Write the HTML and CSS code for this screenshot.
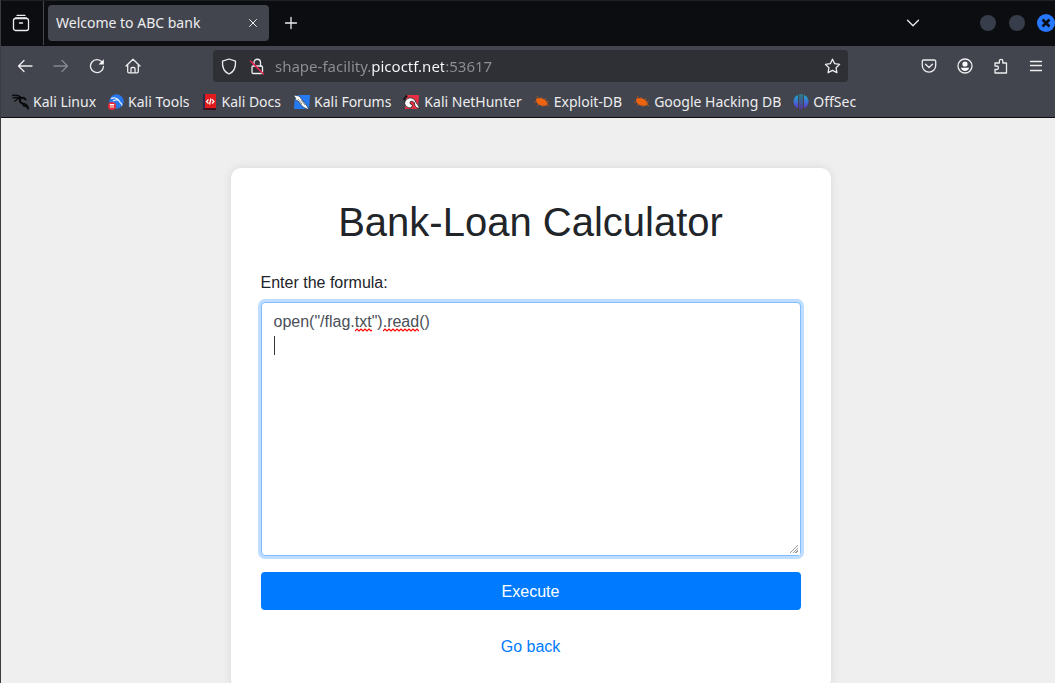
FILE: index.html
```
<!DOCTYPE html>
<html lang="en">
<head>
<meta charset="utf-8">
<title>Welcome to ABC bank</title>
<link rel="stylesheet" href="styles.css">
</head>
<body>
<div class="window">
  <header class="chrome">
    <div class="tabbar">
      <div class="tabview">
        <button class="icon-btn" aria-label="Recent browsing">
          <svg width="18" height="18" viewBox="0 0 18 18" class="line"><path d="M5 1.300h8M3.500 3.800h11"/><rect x="1.500" y="4.500" width="15" height="12" rx="2"/><path d="M7.500 9h3"/></svg>
        </button>
      </div>
      <div class="tab">
        <span class="tab-title">Welcome to ABC bank</span>
        <button class="icon-btn tab-close" aria-label="Close tab">
          <svg width="10" height="10" viewBox="0 0 10 10" class="line thin"><path d="M1.500 1.500l7 7M8.500 1.500l-7 7"/></svg>
        </button>
      </div>
      <button class="icon-btn new-tab" aria-label="New tab">
        <svg width="14" height="14" viewBox="0 0 14 14" class="line"><path d="M7 1.500v11M1.500 7h11"/></svg>
      </button>
      <div class="window-controls">
        <button class="icon-btn list-tabs" aria-label="List all tabs">
          <svg width="14" height="8" viewBox="0 0 14 8" class="line"><path d="M1.500 1.200 7 6.700l5.500-5.500"/></svg>
        </button>
        <button class="dot" aria-label="Minimize"></button>
        <button class="dot" aria-label="Maximize"></button>
        <button class="dot close" aria-label="Close window">
          <svg width="10" height="10" viewBox="0 0 10 10"><path d="M1.500 1.500l7 7M8.500 1.500l-7 7" stroke="#0b0d12" stroke-width="2.600"/></svg>
        </button>
      </div>
    </div>
    <nav class="toolbar" aria-label="Navigation">
      <div class="nav-buttons">
        <button class="icon-btn" aria-label="Back"><svg width="16" height="16" viewBox="0 0 16 16" class="line"><path d="M15 8H1.700M7 2.500 1.500 8 7 13.500"/></svg></button>
        <button class="icon-btn faded" aria-label="Forward"><svg width="16" height="16" viewBox="0 0 16 16" class="line"><path d="M1 8h13.300M9 2.500 14.500 8 9 13.500"/></svg></button>
        <button class="icon-btn" aria-label="Reload"><svg width="16" height="16" viewBox="0 0 16 16" class="line"><path d="M13.200 4.200A6.500 6.500 0 1 0 14.500 8.500"/><path d="M14.800 1.200v5.300H9.500z" fill="#fbfbfe" stroke="none"/></svg></button>
        <button class="icon-btn" aria-label="Home"><svg width="16" height="16" viewBox="0 0 16 16" class="line"><path d="M1 8 8 1.300 15 8M2.700 6.800v6.700a1.300 1.300 0 0 0 1.300 1.300h8a1.300 1.300 0 0 0 1.300-1.300V6.800M6 14.500v-4a1 1 0 0 1 1-1h2a1 1 0 0 1 1 1v4"/></svg></button>
      </div>
      <div class="urlbar">
        <svg width="16" height="17" viewBox="0 0 16 17" class="line"><path d="M8 1 14.500 3.200c.4 5.300-1 10.300-6.500 12.800C2.500 13.500 1.100 8.500 1.500 3.200z"/></svg>
        <svg width="16" height="17" viewBox="0 0 16 17" class="line"><rect x="3" y="8" width="10.500" height="7.500" rx="1.200"/><path d="M5 8V4.500a3.200 3.200 0 0 1 6.500 0V8"/><path d="M1.500 3 14.500 16" stroke="#e22850" stroke-width="1.600"/></svg>
        <input class="url" type="text" aria-label="Address" value="shape-facility.picoctf.net:53617">
        <button class="icon-btn" aria-label="Bookmark this page"><svg width="17" height="16" viewBox="0 0 17 16" class="line"><path d="M8.500 1.200l2.200 4.500 4.900.7-3.500 3.400.8 4.900-4.400-2.300-4.400 2.300.8-4.900L1.400 6.400l4.900-.7z"/></svg></button>
      </div>
      <div class="tool-buttons">
        <button class="icon-btn" aria-label="Pocket"><svg width="16" height="16" viewBox="0 0 16 16" class="line"><path d="M2.500 2h11a1.200 1.200 0 0 1 1.200 1.200v4.300a6.700 6.700 0 0 1-13.400 0V3.200A1.200 1.200 0 0 1 2.500 2zM4.500 6.200 8 9.500l3.500-3.300"/></svg></button>
        <button class="icon-btn" aria-label="Account"><svg width="16" height="16" viewBox="0 0 16 16" class="line"><circle cx="8" cy="8" r="7"/><circle cx="8" cy="6" r="2.600" fill="#fbfbfe" stroke="none"/><path d="M3.800 9.800h8.400c-.5 2-2.200 3.200-4.200 3.200s-3.700-1.200-4.200-3.200z" fill="#fbfbfe" stroke="none"/></svg></button>
        <button class="icon-btn" aria-label="Extensions"><svg width="16" height="16" viewBox="0 0 16 16" class="line"><path d="M2 15h11.500V5H9.800V3a1.700 1.700 0 0 0-3.400 0v2H2v3h1.700a1.700 1.700 0 0 1 0 3.500H2z"/></svg></button>
        <button class="icon-btn" aria-label="Menu"><svg width="14" height="14" viewBox="0 0 14 14" class="line"><path d="M1.500 2.500h11M1.500 6.500h11M1.500 11.500h11"/></svg></button>
      </div>
    </nav>
    <nav class="bookmarks" aria-label="Bookmarks">
      <a href="#"><svg width="17" height="16" viewBox="0 0 17 16" fill="none" stroke="#08090b" stroke-linecap="round"><path d="M.5 1.500c4-1 7 0 9 2.500M1 4c3-1.200 5-.5 8 .5M3 7C5 4.800 7 4.200 9.500 4.500" stroke-width="1.300"/><path d="M9 4c2-.6 3.500 0 4.500 1.500M8.500 5c-1.500 3 .5 4.500 3.500 5 2.500.5 3.500 2 4 4.500" stroke-width="2"/><path d="M11 10c0 2 1 2.500 2.500 2.500" stroke-width="1.200"/></svg>Kali Linux</a>
      <a href="#"><svg width="16" height="16" viewBox="0 0 16 16"><circle cx="8.500" cy="7.500" r="7.200" fill="#2878ed"/><path d="M3 4.500c4-1.500 7 .5 8 2M5 7c2-1.500 5-1.500 6-.5 0 2 3 2 3 5" fill="none" stroke="#e8f1ff" stroke-width="1.200"/><circle cx="4" cy="12" r="4" fill="#e52b37"/><path d="M1.800 10.500h4.400M3 10.500v3.500M5 10.500v3.500" stroke="#fff" fill="none"/></svg>Kali Tools</a>
      <a href="#"><svg width="16" height="16" viewBox="0 0 16 16"><path d="M1 1h13v15H1z" fill="#42101c"/><path d="M2 0h12v14H2z" fill="#e21b1f"/><path d="M1 0h2v15H1z" fill="#292b50"/><path d="M6.500 5.500 4.500 7.500l2 2M10 5.500l2 2-2 2M9 4.500l-1.500 6" stroke="#fff" stroke-width="1.200" fill="none"/></svg>Kali Docs</a>
      <a href="#"><svg width="17" height="16" viewBox="0 0 17 16"><path d="M2 1h15l-1 14H1z" fill="#267bf3"/><path d="M0 1l6 1 4 5 4 5 2 4-6-3-5-6-4-2 2-.5z" fill="#fff" stroke="#15191f" stroke-width=".6"/><path d="M5 5l4 5M8 6l4 5" stroke="#222" stroke-width=".5"/></svg>Kali Forums</a>
      <a href="#"><svg width="17" height="16" viewBox="0 0 17 16"><path d="M3 1h13l-1 14H2z" fill="#e82f43"/><path d="M1.500 9C3 3.500 9 2 12 6.500c1 3 4 4.500 4.500 8-4-.5-5-3-5-5.500-1.500-2.500-5-2.500-4.500.5l2.500 2-1.500 2.500C4 14 2 12 1.500 9z" fill="#fff" stroke="#15191f" stroke-width=".8"/><path d="M0 5l3-4 2 1-4 5z" fill="#15191f"/></svg>Kali NetHunter</a>
      <a href="#"><svg width="16" height="14" viewBox="0 0 16 14"><path d="M2 4c3-2 8-.5 10 2l2 3c-1 2-4 2-7 1.500C3.500 9.500 2 7 2 4z" fill="#ed6310"/><path d="M5 4 3 1M8 4 7 2M11 5l1-2M3 7 0 7M5 9l-2 2M8 10l1 2M12 7l3-1M12 9l3 2" stroke="#b9581f" stroke-width=".9"/></svg>Exploit-DB</a>
      <a href="#"><svg width="16" height="14" viewBox="0 0 16 14"><path d="M2 4c3-2 8-.5 10 2l2 3c-1 2-4 2-7 1.500C3.500 9.500 2 7 2 4z" fill="#ed6310"/><path d="M5 4 3 1M8 4 7 2M11 5l1-2M3 7 0 7M5 9l-2 2M8 10l1 2M12 7l3-1M12 9l3 2" stroke="#b9581f" stroke-width=".9"/></svg>Google Hacking DB</a>
      <a href="#"><svg width="16" height="16" viewBox="0 0 16 16"><defs><linearGradient id="off" gradientUnits="userSpaceOnUse" x1="0" y1="0" x2="0" y2="16"><stop offset="0" stop-color="#16b3c8"/><stop offset="1" stop-color="#6a28d9"/></linearGradient></defs><path d="M5 1C-1 3-1 12 5 14zM11 1c6 2 6 11 0 13zM6.500 0h1V15h-1zM8.500 0h1V15h-1z" fill="url(#off)"/></svg>OffSec</a>
    </nav>
  </header>
  <main class="page">
    <section class="card">
      <h1>Bank-Loan Calculator</h1>
      <form class="form">
        <label for="formula">Enter the formula:</label>
        <div class="field">
          <textarea id="formula" rows="10" spellcheck="false">open("/flag.txt").read()
</textarea>
          <svg class="squiggle squiggle-ext" width="17" height="4" viewBox="0 0 17 4"><path d="M0 3l2-2 2 2 2-2 2 2 2-2 2 2 2-2 2 2 1-1"/></svg>
          <svg class="squiggle squiggle-call" width="36" height="4" viewBox="0 0 36 4"><path d="M0 3l2-2 2 2 2-2 2 2 2-2 2 2 2-2 2 2 2-2 2 2 2-2 2 2 2-2 2 2 2-2 2 2 2-2 2 2"/></svg>
          <span class="caret"></span>
        </div>
        <button class="execute" type="button">Execute</button>
      </form>
      <a class="back" href="#">Go back</a>
    </section>
  </main>
</div>
</body>
</html>
```
FILE: styles.css
```
* { box-sizing: border-box; }

body {
  margin: 0;
  height: 100vh;
  overflow: hidden;
  background: #efefef;
}

.window {
  min-height: 100vh;
  border-left: 1px solid #3b3c40;
}

.chrome {
  color: #ededf0;
  font: 14px/20px "Noto Sans", sans-serif;
  border-bottom: 1px solid #0c0d10;
  background: #42454d;
}

.icon-btn {
  display: flex;
  align-items: center;
  justify-content: center;
  padding: 0;
  border: 0;
  background: none;
}

.line {
  display: block;
  flex: none;
  fill: none;
  stroke: #ededf0;
  stroke-width: 1.3;
  stroke-linecap: round;
  stroke-linejoin: round;
}

.thin { stroke-width: 1; }

.faded { opacity: 0.4; }

.tabbar {
  display: flex;
  align-items: center;
  height: 46px;
  padding-bottom: 1px;
  border-top: 1px solid #1e2227;
  background: #0c0d11;
}

.tabview {
  display: flex;
  align-items: center;
  justify-content: center;
  width: 43px;
  height: 44px;
  padding-right: 3px;
  border-right: 1px solid #44464b;
}

.tab {
  display: flex;
  align-items: center;
  justify-content: space-between;
  width: 221px;
  height: 36px;
  margin-left: 4px;
  padding: 0 11px 0 8px;
  border-radius: 4px;
  background: #42454d;
}

.new-tab { margin-left: 15px; }

.window-controls {
  display: flex;
  align-items: center;
  gap: 13px;
  margin-left: auto;
}

.list-tabs { margin-right: 47px; }

.dot {
  width: 16px;
  height: 16px;
  padding: 0;
  border: 0;
  border-radius: 50%;
  background: #373d4a;
}

.dot.close {
  display: flex;
  align-items: center;
  justify-content: center;
  width: 18px;
  height: 18px;
  margin-left: -1px;
  background: #2777ff;
}

.toolbar {
  display: flex;
  align-items: center;
  height: 40px;
  padding: 0 12px 0 16px;
}

.nav-buttons,
.tool-buttons {
  display: flex;
  align-items: center;
  gap: 20px;
}

.urlbar {
  display: flex;
  flex: 1;
  align-items: center;
  gap: 12px;
  height: 32px;
  margin: 0 73px 0 72px;
  padding: 0 7px 0 8px;
  border-radius: 4px;
  background: #2f3035;
}

.url {
  flex: 1;
  min-width: 0;
  height: 24px;
  margin-left: -2px;
  padding: 0;
  border: 0;
  outline: 0;
  font: inherit;
  font-size: 15px;
  color: transparent;
  background: linear-gradient(90deg, #8e8f93 96px, #fbfbfe 96px, #fbfbfe 169px, #8e8f93 169px);
  background-clip: text;
  -webkit-background-clip: text;
}

.bookmarks {
  display: flex;
  align-items: center;
  gap: 12px;
  height: 31px;
  padding: 0 11px;
  white-space: nowrap;
}

.bookmarks a {
  display: flex;
  align-items: center;
  gap: 4px;
  color: inherit;
  text-decoration: none;
}

.page {
  padding: 50px 0 0 5px;
  color: #212529;
  font: 16px/24px "Liberation Sans", sans-serif;
}

.card {
  max-width: 600px;
  margin: 0 auto;
  padding: 30px;
  border-radius: 10px;
  background: #fff;
  box-shadow: 0 0 10px rgba(0, 0, 0, 0.1);
}

.card h1 {
  margin: 0 0 25px;
  font-size: 40px;
  line-height: 48px;
  font-weight: 400;
  text-align: center;
}

.form label {
  display: block;
  margin-bottom: 7px;
}

.field {
  position: relative;
  margin-bottom: 16px;
}

.field textarea {
  display: block;
  width: 100%;
  padding: 7px 12px 5px;
  border: 1px solid #80bdff;
  border-radius: 4px;
  outline: 0;
  font: inherit;
  color: #495057;
  background: #fff;
  box-shadow: 0 0 0 3px #bfdeff;
  resize: vertical;
}

.field textarea::-webkit-resizer {
  border: solid #fff;
  border-width: 3px 2px 2px 3px;
  background:
    linear-gradient(135deg, #fff 50%, transparent 50%),
    repeating-linear-gradient(135deg, #999 0 1px, #fff 1px 2px);
}

.squiggle {
  position: absolute;
  top: 26px;
  fill: none;
  stroke: #f00;
  stroke-width: 1.2;
  pointer-events: none;
}

.squiggle-ext { left: 94px; }
.squiggle-call { left: 122px; }

.caret {
  position: absolute;
  top: 34px;
  left: 13px;
  width: 1px;
  height: 19px;
  background: #33383d;
  pointer-events: none;
}

.execute {
  display: block;
  width: 100%;
  padding: 8px 12px 6px;
  border: 0;
  border-radius: 4px;
  font: inherit;
  color: #fff;
  background: #007bff;
}

.back {
  display: block;
  margin-top: 25px;
  text-align: center;
  text-decoration: none;
  color: #007bff;
}
```
